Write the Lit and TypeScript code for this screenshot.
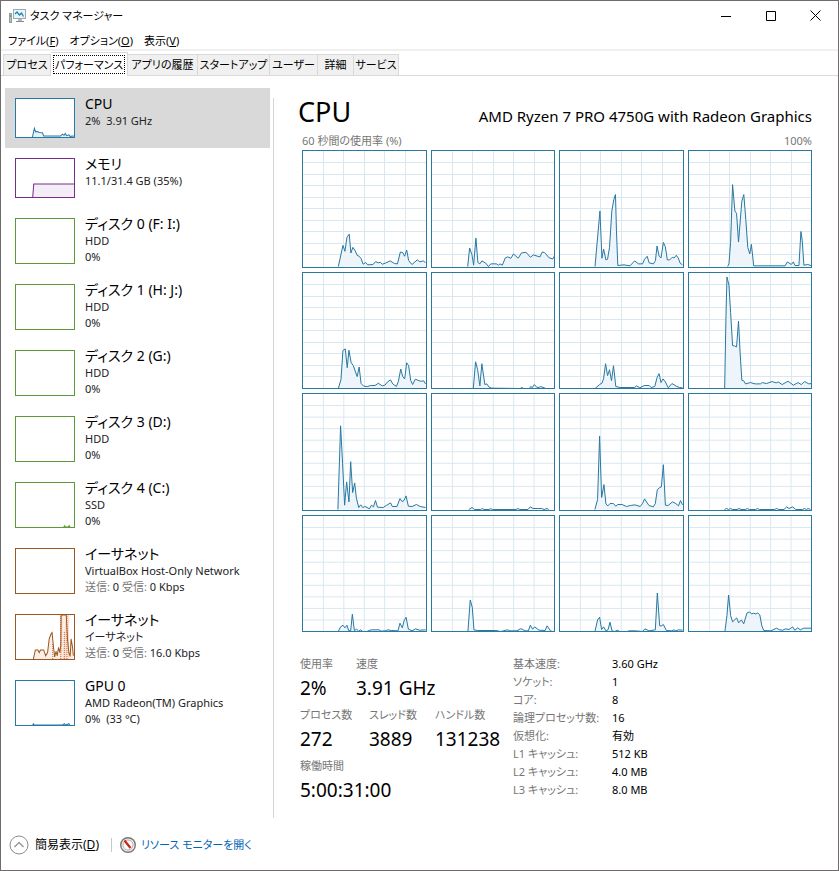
import { LitElement, html, svg, css, nothing } from "lit";
import { customElement, property, state } from "lit/decorators.js";
import { classMap } from "lit/directives/class-map.js";
import { styleMap } from "lit/directives/style-map.js";

type Series = number[][];

// Each sample is [x, height above the baseline].
const WIDE = { width: 371, height: 350 };
const NARROW = { width: 365, height: 348 };

const row1: Series[] = [
  [[107,0],[121,64],[127,46],[133,88],[140,98],[145,41],[151,58],[158,48],[164,34],[170,31],[176,24],[182,7],[190,12],[196,5],[212,6],[220,15],[228,11],[234,13],[240,7],[249,10],[264,17],[277,9],[286,8],[295,44],[302,42],[308,31],[314,50],[320,18],[330,6],[346,20],[354,14],[364,17],[371,12]],
  [[108,0],[114,56],[121,36],[126,4],[133,86],[139,12],[145,8],[151,17],[163,10],[171,0],[178,8],[195,8],[201,4],[206,8],[213,4],[222,26],[229,29],[239,25],[247,38],[261,25],[271,41],[285,43],[298,28],[307,35],[327,29],[334,44],[341,42],[355,26],[366,23],[371,32]],
  [[106,0],[121,168],[127,25],[132,53],[139,20],[144,22],[150,58],[157,168],[163,203],[168,218],[171,108],[175,3],[194,5],[212,2],[226,17],[238,8],[250,8],[256,22],[264,31],[270,11],[283,8],[289,18],[294,62],[300,32],[306,26],[313,73],[319,60],[325,20],[332,20],[340,28],[346,26],[352,34],[358,26],[364,10],[371,5]],
  [[117,0],[121,8],[126,73],[132,248],[139,168],[144,161],[150,74],[160,198],[166,218],[172,143],[178,58],[184,38],[189,67],[196,2],[291,2],[298,14],[310,6],[316,14],[321,3],[333,3],[339,106],[343,78],[348,4],[360,6],[371,2]],
];
const row2: Series[] = [
  [[107,0],[115,27],[121,115],[128,120],[134,63],[139,116],[146,78],[152,70],[164,36],[170,65],[176,15],[184,7],[196,6],[204,9],[218,9],[228,16],[240,8],[248,10],[256,20],[265,26],[272,14],[283,6],[289,22],[296,59],[302,36],[308,29],[314,78],[320,69],[326,25],[332,12],[340,28],[356,22],[366,23],[371,14]],
  [[125,0],[132,81],[138,58],[145,8],[151,75],[160,12],[166,14],[173,4],[181,1],[267,0],[272,3],[277,0],[295,0],[299,6],[304,3],[310,12],[317,4],[324,3],[329,6],[345,0]],
  [[106,0],[120,12],[127,16],[132,30],[138,75],[144,39],[150,57],[156,24],[162,69],[169,6],[182,3],[226,3],[232,8],[242,2],[255,9],[270,9],[276,3],[287,6],[294,33],[300,45],[306,18],[312,29],[319,20],[328,2],[339,15],[352,7],[362,3],[371,2]],
  [[108,0],[112,220],[115,338],[121,313],[126,230],[132,130],[138,129],[144,126],[150,204],[155,105],[160,25],[166,23],[171,14],[186,18],[200,14],[216,14],[222,18],[234,15],[252,21],[264,17],[270,20],[282,12],[300,22],[316,10],[330,18],[340,12],[350,21],[363,14],[371,15]],
];
const row3: Series[] = [
  [[104,0],[112,252],[118,138],[124,13],[130,83],[137,23],[142,144],[148,51],[154,80],[159,35],[166,6],[172,14],[178,6],[185,9],[198,2],[204,13],[210,8],[216,27],[222,7],[239,6],[248,12],[261,20],[266,9],[280,9],[289,33],[295,24],[301,27],[307,41],[314,10],[325,9],[338,15],[349,9],[365,6]],
  [[110,0],[119,6],[127,0],[145,0],[150,3],[155,0],[170,0],[175,3],[180,0],[250,0],[256,3],[262,0],[286,0],[293,8],[301,3],[315,3],[327,3],[334,0],[343,3],[348,0]],
  [[104,0],[112,30],[118,221],[124,36],[131,75],[137,16],[143,11],[149,18],[159,18],[166,10],[172,15],[185,15],[198,9],[210,12],[223,14],[239,9],[246,18],[252,32],[265,12],[278,8],[284,18],[290,60],[297,66],[302,68],[308,135],[314,13],[322,12],[335,23],[345,18],[353,11],[359,27],[365,14]],
  [[106,0],[112,3],[118,0],[124,3],[130,0],[143,0],[149,3],[155,0],[168,0],[174,3],[180,0],[198,0],[204,3],[210,0],[255,0],[261,3],[267,0],[283,0],[291,8],[298,3],[309,8],[318,0],[338,0],[344,3],[350,0],[355,3],[362,0]],
];
const row4: Series[] = [
  [[105,0],[112,14],[119,19],[125,11],[131,19],[136,3],[142,2],[147,52],[153,3],[160,7],[166,1],[172,5],[178,0],[190,0],[203,5],[227,5],[233,1],[245,2],[253,5],[263,3],[283,2],[289,25],[296,11],[301,32],[307,43],[314,7],[325,2],[335,8],[347,4],[365,5]],
  [[107,0],[114,95],[120,73],[125,5],[135,3],[190,3],[205,0],[225,5],[232,2],[253,2],[263,8],[269,7],[277,2],[287,2],[293,19],[300,7],[306,14],[319,4],[337,3],[343,17],[353,2],[358,0]],
  [[104,0],[112,35],[118,43],[124,6],[130,14],[137,2],[143,5],[149,28],[155,2],[163,0],[171,4],[178,0],[200,0],[206,2],[225,2],[246,0],[253,8],[265,2],[284,5],[290,116],[297,17],[303,17],[308,21],[317,3],[333,2],[339,5],[345,2],[353,5],[365,4]],
  [[107,0],[113,48],[118,110],[124,48],[130,29],[142,41],[148,26],[156,35],[163,23],[173,56],[181,59],[186,53],[192,55],[199,53],[205,56],[211,50],[217,17],[223,3],[244,2],[261,10],[270,5],[279,4],[288,8],[298,6],[309,14],[315,4],[324,11],[332,5],[342,10],[365,10]],
];

const cores = [
  ...row1.map((points) => ({ points, box: WIDE })),
  ...row2.map((points) => ({ points, box: WIDE })),
  ...row3.map((points) => ({ points, box: NARROW })),
  ...row4.map((points) => ({ points, box: NARROW })),
];

interface Resource {
  name: string;
  kind: "cpu" | "memory" | "disk" | "net" | "gpu";
  lines: { label?: string; text: string }[][];
  points?: Series;
}

// Thumbnail samples share a 180-unit width; heights are in the same units.
const resources: Resource[] = [
  { name: "CPU", kind: "cpu", lines: [[{ text: "2%\u00a0 3.91 GHz" }]],
    points: [[51,0],[57,27],[61,16],[66,17],[72,14],[82,13],[86,3],[138,3],[144,9],[149,5],[153,11],[157,4],[164,7],[168,2],[180,3]] },
  { name: "メモリ", kind: "memory", lines: [[{ text: "11.1/31.4 GB (35%)" }]],
    points: [[52,0],[55,40],[180,40]] },
  { name: "ディスク 0 (F: I:)", kind: "disk", lines: [[{ text: "HDD" }], [{ text: "0%" }]] },
  { name: "ディスク 1 (H: J:)", kind: "disk", lines: [[{ text: "HDD" }], [{ text: "0%" }]] },
  { name: "ディスク 2 (G:)", kind: "disk", lines: [[{ text: "HDD" }], [{ text: "0%" }]] },
  { name: "ディスク 3 (D:)", kind: "disk", lines: [[{ text: "HDD" }], [{ text: "0%" }]] },
  { name: "ディスク 4 (C:)", kind: "disk", lines: [[{ text: "SSD" }], [{ text: "0%" }]],
    points: [[148,0],[151,4],[154,0],[162,0],[165,4],[168,0]] },
  { name: "イーサネット", kind: "net",
    lines: [[{ text: "VirtualBox Host-Only Network" }], [{ label: "送信:", text: " 0 " }, { label: "受信:", text: " 0 Kbps" }]] },
  { name: "イーサネット", kind: "net",
    lines: [[{ text: "イーサネット" }], [{ label: "送信:", text: " 0 " }, { label: "受信:", text: " 16.0 Kbps" }]],
    points: [[54,0],[60,28],[68,28],[72,20],[76,28],[86,28],[92,10],[98,20],[103,62],[109,78],[112,82],[116,40],[120,6],[124,24],[128,10],[132,36],[136,20],[139,40],[140,136],[156,136],[160,60],[164,20],[168,8],[171,62],[175,40],[178,10]] },
  { name: "GPU 0", kind: "gpu", lines: [[{ text: "AMD Radeon(TM) Graphics" }], [{ text: "0%\u00a0 (33 °C)" }]],
    points: [[52,0],[54,4],[57,0],[145,0],[150,4],[154,0],[164,4],[167,0]] },
];

const tabs = [
  { name: "プロセス", width: 48 },
  { name: "パフォーマンス", width: 77 },
  { name: "アプリの履歴", width: 70 },
  { name: "スタートアップ", width: 72 },
  { name: "ユーザー", width: 48 },
  { name: "詳細", width: 36 },
  { name: "サービス", width: 45 },
];

const details = [
  ["基本速度:", "3.60 GHz"],
  ["ソケット:", "1"],
  ["コア:", "8"],
  ["論理プロセッサ数:", "16"],
  ["仮想化:", "有効"],
  ["L1 キャッシュ:", "512 KB"],
  ["L2 キャッシュ:", "4.0 MB"],
  ["L3 キャッシュ:", "8.0 MB"],
];

@customElement("usage-graph")
class UsageGraph extends LitElement {
  @property({ attribute: false }) points: Series = [];
  @property({ type: Number }) boxWidth = 371;
  @property({ type: Number }) boxHeight = 350;
  @property({ type: Boolean }) gridlines = false;
  @property({ type: Boolean }) bursts = false;

  static styles = css`
    :host { display: block; box-sizing: border-box; border: 1px solid var(--line); background: #fff; overflow: hidden; }
    svg { display: block; width: 100%; height: 100%; }
    .grid { stroke: #d9e8f0; stroke-width: 1; fill: none; shape-rendering: crispEdges; }
    .area { fill: var(--fill); }
    .trace { fill: none; stroke: var(--line); stroke-width: 1; }
    .burst { fill: #fbdccd; }
    .dash { stroke: #cc6a42; stroke-width: 1; stroke-dasharray: 1 1; fill: none; }
    .grid, .trace, .dash { vector-effect: non-scaling-stroke; }
  `;

  render() {
    const w = this.boxWidth;
    const h = this.boxHeight;
    const pts = this.points.map(([x, y]) => `${x},${h - y}`).join(" ");
    const first = this.points[0];
    const last = this.points[this.points.length - 1];
    let lines = "";
    for (let i = 1; i < 6; i++) lines += `M${(w * i) / 6} 0V${h}`;
    for (let i = 1; i < 10; i++) lines += `M0 ${(h * i) / 10}H${w}`;
    return html`<svg viewBox="0 0 ${w} ${h}" preserveAspectRatio="none" aria-hidden="true">
      ${this.gridlines ? svg`<path class="grid" d=${lines} />` : nothing}
      ${first
        ? svg`<polygon class="area" points="${first[0]},${h} ${pts} ${last[0]},${h}" />`
        : nothing}
      ${this.bursts
        ? svg`<path class="burst" d="M138 136V0h6v136zM146 136l4-80 5-56h3v136zM160 136V0h5v136z" />
            <path class="dash" d="M114 136V90M139 136V0M150 136V50M158 136V0" />`
        : nothing}
      ${first ? svg`<polyline class="trace" points=${pts} />` : nothing}
    </svg>`;
  }
}

@customElement("app-root")
class AppRoot extends LitElement {
  @state() private tab = 1;
  @state() private selected = 0;

  static styles = css`
    :host {
      display: flex; flex-direction: column; box-sizing: border-box; min-height: 100vh;
      border: 1px solid #6e6c6d; background: #fff; color: #000;
      font-family: "Noto Sans", "Noto Sans CJK JP", sans-serif;
      font-size: 12px; line-height: 16px; font-feature-settings: "palt"; white-space: nowrap;
    }
    button { font: inherit; font-feature-settings: inherit; color: inherit; background: none; border: 0; padding: 0; margin: 0; text-align: left; }
    h1, h2, p, dl, dd, dt { margin: 0; font-weight: 400; }
    .titlebar { display: flex; align-items: center; height: 29px; padding-left: 8px; gap: 4px; }
    .titlebar h1 { flex: 1; font-size: 11px; }
    .controls { display: flex; }
    .control { width: 45px; height: 29px; display: flex; align-items: center; justify-content: center; }
    .menu { display: flex; gap: 11px; height: 17px; align-items: center; padding: 2px 0 0 7px; border-bottom: 2px solid #f0f0f0; font-size: 11px; }
    u { text-decoration: underline; text-underline-offset: 1px; }
    .tabs { display: flex; align-items: flex-end; height: 24px; padding: 0 2px; border-bottom: 1px solid #d9d9d9; }
    .tab { box-sizing: border-box; height: 21px; background: #f0f0f0; border: 1px solid #d9d9d9; border-bottom: 0; border-left-width: 0; text-align: center; font-size: 11px; line-height: 20px; }
    .tab:first-child { border-left-width: 1px; }
    .tab.active { height: 24px; margin-bottom: -1px; background: #fff; padding: 1px 2px 2px; }
    .tab.active span { display: block; border: 1px dotted #000; line-height: 17px; }
    .body { flex: 1; display: flex; padding: 12px 26px 0 4px; }
    .resources { width: 265px; flex: none; }
    .resource { display: flex; width: 100%; align-items: flex-start; padding: 7px 0 0 10px; height: 66px; box-sizing: border-box; gap: 10px; color: #222; }
    .resource.short { height: 60px; }
    .resource.on { background: #d9d9d9; }
    .thumb { width: 60px; height: 46px; flex: none; margin-top: 3px; }
    .short .thumb { height: 40px; }
    .cpu, .gpu { --line: #2878a8; --fill: #e6f2fa; }
    .memory { --line: #7b2b8e; --fill: #f3eef5; }
    .disk { --line: #5d9a35; --fill: #eef6e8; }
    .net { --line: #99581f; --fill: #fbeee6; }
    .name { display: block; font-size: 14px; line-height: 18px; color: #000; }
    .line { display: block; font-size: 11px; line-height: 16px; white-space: pre; }
    .muted { color: #767676; }
    .divider { width: 1px; margin: 10px 24px 0 3px; background: #d4d4d4; }
    .pane { flex: 1; display: flex; flex-direction: column; min-width: 0; }
    .heading { display: flex; justify-content: space-between; align-items: baseline; height: 45px; }
    .heading h2 { font-size: 27px; line-height: 48px; }
    .heading p { font-size: 15px; }
    .caption { display: flex; justify-content: space-between; padding: 0 0 1px 4px; font-size: 11px; color: #767676; }
    .cores { flex: 1; display: grid; grid-template-columns: repeat(4, 1fr); grid-template-rows: repeat(4, 1fr); gap: 4px; margin-left: 4px; min-height: 320px; --line: #2878a0; --fill: #edf5fb; }
    .core { min-width: 0; min-height: 0; position: relative; }
    .core usage-graph { position: absolute; inset: 0; }
    .stats { display: flex; padding: 23px 0 13px 2px; }
    .totals { width: 213px; display: flex; flex-direction: column; gap: 3px; }
    .totals dl { display: flex; }
    .totals dt { font-size: 11px; line-height: 18px; color: #767676; }
    .totals dd { font-size: 19px; line-height: 30px; }
    .a { width: 56px; }
    .b { width: 69px; }
    .c { width: 66px; }
    .details { display: grid; grid-template-columns: 99px auto; align-content: start; line-height: 18px; font-size: 11px; }
    .details dt { color: #767676; }
    .footer { display: flex; align-items: center; height: 50px; padding: 2px 0 0 8px; }
    .fewer { display: flex; align-items: center; gap: 6px; }
    .rule { width: 1px; height: 14px; background: #c8c8c8; margin: 0 8px 0 12px; }
    .monitor { display: flex; align-items: center; gap: 5px; color: #0066b4; text-decoration: none; font-size: 11px; }
    svg { display: block; flex: none; }
  `;

  private renderResource(r: Resource, i: number) {
    const short = r.lines.length === 1;
    return html`<button
      class=${classMap({ resource: true, short, on: i === this.selected })}
      @click=${() => (this.selected = i)}
    >
      <usage-graph class="thumb ${r.kind}" .points=${r.points ?? []} .boxWidth=${180}
        .boxHeight=${short ? 118 : 136} .bursts=${i === 8}></usage-graph>
      <span>
        <span class="name">${r.name}</span>
        ${r.lines.map((line) => html`<span class="line">${line.map((part) =>
          html`${part.label ? html`<span class="muted">${part.label}</span>` : nothing}${part.text}`)}</span>`)}
      </span>
    </button>`;
  }

  render() {
    return html`
      <header class="titlebar">
        <svg width="17" height="16" viewBox="0 0 17 16" aria-hidden="true">
          <rect x="0.5" y="5.5" width="2" height="9" fill="#b9bcbd" stroke="#9a9ea0" />
          <rect x="1" y="7" width="1" height="2" fill="#4caf50" />
          <rect x="4.5" y="1.500" width="12" height="9" fill="#e4f5fc" stroke="#a3a9ac" />
          <path d="M6 6l2-2 2.500 3 2-2 2 3.500" fill="none" stroke="#1b84ad" stroke-width="1.200" />
          <path d="M9 11h4v2H9z" fill="#b5b9bb" /><path d="M7 13h8v1H7z" fill="#85898b" />
        </svg>
        <h1>タスク マネージャー</h1>
        <div class="controls">
          <button class="control" aria-label="最小化"><svg width="10" height="10"><path d="M0 5.5h10" stroke="#000" /></svg></button>
          <button class="control" aria-label="最大化"><svg width="10" height="10"><path d="M.5.5h9v9h-9z" fill="none" stroke="#000" /></svg></button>
          <button class="control" aria-label="閉じる"><svg width="11" height="11"><path d="M.5.5l10 10M10.5.5l-10 10" stroke="#000" /></svg></button>
        </div>
      </header>
      <nav class="menu">
        <button>ファイル(<u>F</u>)</button>
        <button>オプション(<u>O</u>)</button>
        <button>表示(<u>V</u>)</button>
      </nav>
      <div class="tabs" role="tablist">
        ${tabs.map((t, i) => html`<button role="tab" class=${classMap({ tab: true, active: i === this.tab })}
          style=${styleMap({ width: `${t.width}px` })} aria-selected=${i === this.tab}
          @click=${() => (this.tab = i)}><span>${t.name}</span></button>`)}
      </div>
      <main class="body">
        <nav class="resources">${resources.map((r, i) => this.renderResource(r, i))}</nav>
        <div class="divider"></div>
        <section class="pane">
          <div class="heading"><h2>CPU</h2><p>AMD Ryzen 7 PRO 4750G with Radeon Graphics</p></div>
          <div class="caption"><span>60 秒間の使用率 (%)</span><span>100%</span></div>
          <div class="cores">
            ${cores.map((c) => html`<div class="core"><usage-graph .points=${c.points} .boxWidth=${c.box.width}
              .boxHeight=${c.box.height} .gridlines=${true}></usage-graph></div>`)}
          </div>
          <div class="stats">
            <div class="totals">
              <dl><div class="a"><dt>使用率</dt><dd>2%</dd></div><div><dt>速度</dt><dd>3.91 GHz</dd></div></dl>
              <dl>
                <div class="b"><dt>プロセス数</dt><dd>272</dd></div>
                <div class="c"><dt>スレッド数</dt><dd>3889</dd></div>
                <div><dt>ハンドル数</dt><dd>131238</dd></div>
              </dl>
              <dl><div><dt>稼働時間</dt><dd>5:00:31:00</dd></div></dl>
            </div>
            <dl class="details">
              ${details.map(([k, v]) => html`<dt>${k}</dt><dd>${v}</dd>`)}
            </dl>
          </div>
        </section>
      </main>
      <footer class="footer">
        <button class="fewer">
          <svg width="20" height="20" viewBox="0 0 20 20" aria-hidden="true">
            <circle cx="10" cy="10" r="9" fill="#fff" stroke="#8c8c8c" />
            <path d="M5.5 12L10 7.5l4.500 4.500" fill="none" stroke="#9a9a9a" stroke-width="1.500" />
          </svg>
          <span>簡易表示(<u>D</u>)</span>
        </button>
        <span class="rule"></span>
        <a class="monitor" href="#resource-monitor">
          <svg width="16" height="16" viewBox="0 0 16 16" aria-hidden="true">
            <circle cx="8" cy="8" r="7.300" fill="#eee" stroke="#777" stroke-width="1.400" />
            <circle cx="8" cy="8" r="5" fill="#fff" stroke="#c9a9a0" />
            <path d="M4.500 3.500l6 7.500" stroke="#c8231c" stroke-width="2.200" />
          </svg>
          <span>リソース モニターを開く</span>
        </a>
      </footer>
    `;
  }
}
